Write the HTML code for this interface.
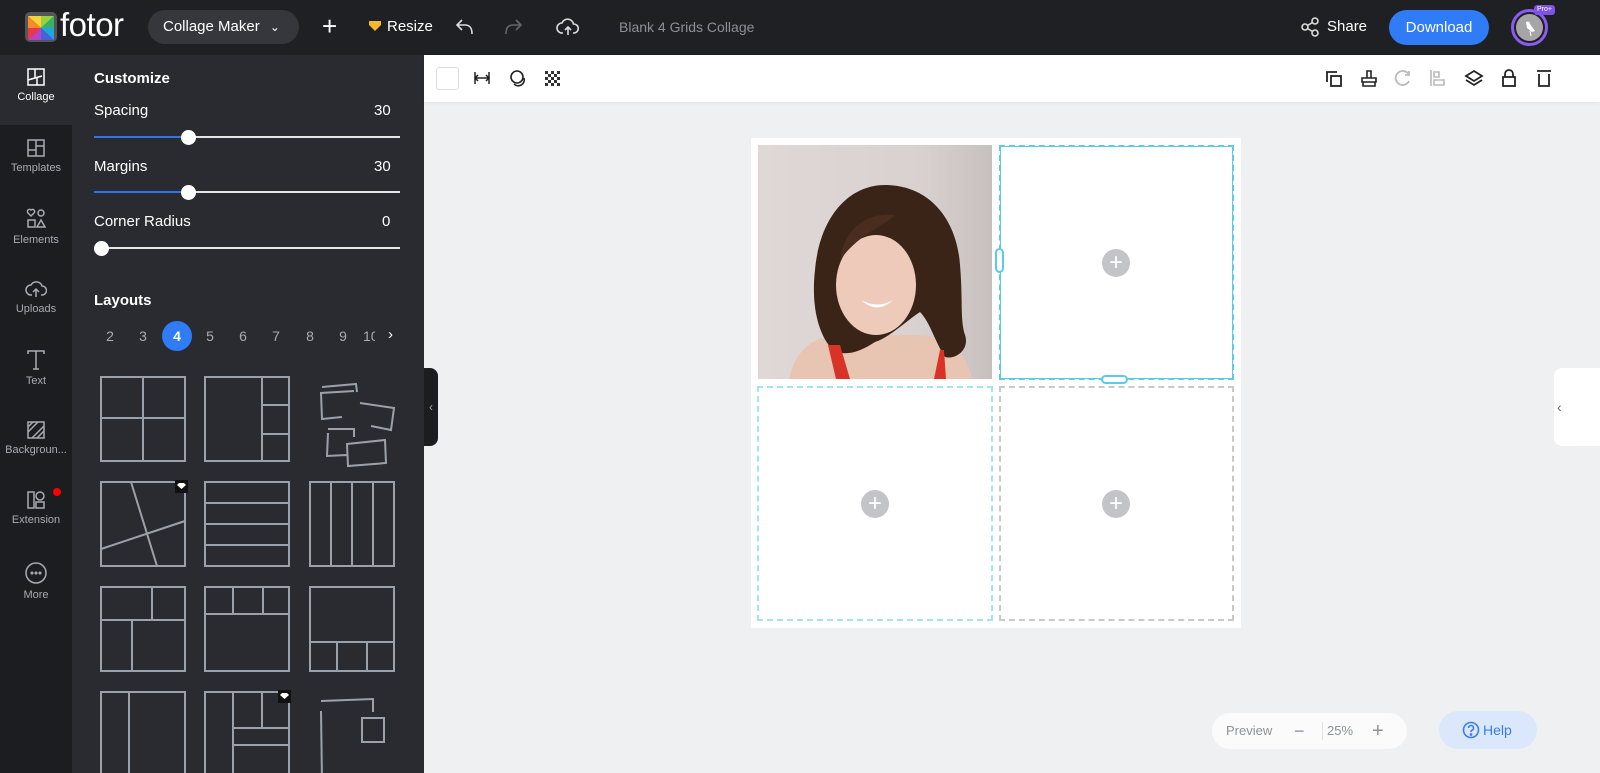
<!DOCTYPE html>
<html><head><meta charset="utf-8"><style>
*{box-sizing:border-box;margin:0;padding:0}
body{width:1600px;height:773px;overflow:hidden;font-family:"Liberation Sans",sans-serif;background:#eff0f2;position:relative}
.abs{position:absolute}
#top{left:0;top:0;width:1600px;height:55px;background:#1f2024;color:#fff}
#rail{left:0;top:55px;width:72px;height:718px;background:#1c1d21}
#panel{left:72px;top:55px;width:352px;height:718px;background:#2a2b30;color:#fff;overflow:hidden}
.ri{position:absolute;left:0;width:72px;height:70px;text-align:center;color:#a9abb3;font-size:11px}
.ri svg{display:block;margin:12px auto 4px}
.lbl{font-size:15px;color:#fff}
.track{position:absolute;left:22px;width:306px;height:2px;background:#e5e5e5}
.fill{position:absolute;left:22px;height:2px;background:#2f74e8}
.knob{position:absolute;width:15px;height:15px;border-radius:50%;background:#fff}
.num{position:absolute;font-size:14px;color:#a9abb3;width:20px;text-align:center}
#tb{left:424px;top:55px;width:1176px;height:47px;background:#fff;box-shadow:0 1px 3px rgba(0,0,0,.06)}
.cell{position:absolute;background:#fff}
.plus{position:absolute;width:28px;height:28px;border-radius:50%;background:#c3c4c7;color:#fff;font-size:24px;line-height:27px;text-align:center}
</style></head><body>
<div id="top" class="abs">
  <svg class="abs" style="left:24px;top:11px" width="34" height="32" viewBox="0 0 34 32"><rect x="1" y="1" width="32" height="30" rx="5" fill="#555"/><g transform="translate(17,17)"><path d="M0 0L-13-12H0z" fill="#f7d33a"/><path d="M0 0L0-12H13z" fill="#9bd13c"/><path d="M0 0L13-12V0z" fill="#34b36b"/><path d="M0 0H13V12z" fill="#1fa6e0"/><path d="M0 0L13 12H0z" fill="#4b5fd8"/><path d="M0 0V12H-13z" fill="#b544c9"/><path d="M0 0L-13 12V0z" fill="#e9384a"/><path d="M0 0H-13V-12z" fill="#f68a2a"/></g></svg>
  <div class="abs" style="left:60px;top:6px;font-size:33px;color:#fff;letter-spacing:-0.5px">fotor</div>
  <div class="abs" style="left:148px;top:10px;width:151px;height:34px;border-radius:17px;background:#36373c;font-size:15px;line-height:34px;padding-left:15px">Collage Maker <span style="font-size:12px;margin-left:6px">&#8964;</span></div>
  <div class="abs" style="left:322px;top:11px;font-size:26px;font-weight:300">+</div>
  <svg class="abs" style="left:368px;top:20px" width="14" height="12"><path d="M1 1h12v4L7 11 1 5z" fill="#f5b82e"/></svg>
  <div class="abs" style="left:387px;top:18px;font-size:15px">Resize</div>
  <svg class="abs" style="left:455px;top:17px" width="20" height="20" fill="none" stroke="#ddd" stroke-width="1.6"><path d="M7 3L2 8l5 5M2 8h8c5 0 7 3 7 9"/></svg>
  <svg class="abs" style="left:503px;top:17px" width="20" height="20" fill="none" stroke="#666" stroke-width="1.6"><path d="M13 3l5 5-5 5M18 8h-8c-5 0-7 3-7 9"/></svg>
  <svg class="abs" style="left:556px;top:16px" width="24" height="22" fill="none" stroke="#ddd" stroke-width="1.6"><path d="M7 17H6a5 5 0 0 1 0-10 6 6 0 0 1 11.5 1A4.5 4.5 0 0 1 18 17h-1"/><path d="M12 19v-8M9 14l3-3 3 3"/></svg>
  <div class="abs" style="left:619px;top:19px;font-size:14px;color:#8e9097">Blank 4 Grids Collage</div>
  <svg class="abs" style="left:1300px;top:17px" width="20" height="20" fill="none" stroke="#ddd" stroke-width="1.6"><circle cx="5" cy="10" r="3"/><circle cx="15" cy="4" r="3"/><circle cx="15" cy="16" r="3"/><path d="M7.5 8.5l5-3M7.5 11.5l5 3"/></svg>
  <div class="abs" style="left:1327px;top:18px;font-size:15px">Share</div>
  <div class="abs" style="left:1389px;top:10px;width:100px;height:35px;border-radius:18px;background:#2f7cf6;font-size:15px;line-height:35px;text-align:center">Download</div>
  <div class="abs" style="left:1511px;top:9px;width:37px;height:37px;border-radius:50%;border:3px solid #8b5cf0;background:#1f2024"></div>
  <div class="abs" style="left:1516px;top:14px;width:27px;height:27px;border-radius:50%;background:#a5a5a8"></div>
  <svg class="abs" style="left:1521px;top:18px" width="18" height="20"><path d="M5 4c2-1 4 0 4 2l5 7-3 1-5-4z" fill="#fff"/><path d="M9 13l1 5" stroke="#fff"/></svg>
  <div class="abs" style="left:1534px;top:5px;width:21px;height:10px;border-radius:3px;background:#7d52e6;font-size:7px;line-height:10px;text-align:center">Pro+</div>
</div>

<div id="rail" class="abs">
  <div class="ri" style="top:0;background:#2a2b30;color:#fff"><svg width="20" height="20" fill="none" stroke="#fff" stroke-width="1.5"><rect x="2" y="2" width="16" height="16"/><path d="M9 2v9l-7 2M9 11l7-2M11 11v7"/></svg>Collage</div>
  <div class="ri" style="top:71px"><svg width="20" height="20" fill="none" stroke="#a9abb3" stroke-width="1.5"><rect x="2" y="2" width="16" height="16"/><path d="M10 2v16M2 12h8M10 8h8"/></svg>Templates</div>
  <div class="ri" style="top:141px"><svg width="20" height="22" fill="none" stroke="#a9abb3" stroke-width="1.5"><path d="M5 8L2 5a2 2 0 0 1 3-3 2 2 0 0 1 3 3z"/><circle cx="15" cy="5" r="3"/><rect x="2" y="12" width="7" height="7"/><path d="M15 12l4 7h-8z"/></svg>Elements</div>
  <div class="ri" style="top:212px"><svg width="22" height="20" fill="none" stroke="#a9abb3" stroke-width="1.5"><path d="M7 16H6a5 5 0 0 1 0-10 6 6 0 0 1 11 1 4 4 0 0 1 0 9h-1"/><path d="M11 18v-8M8 13l3-3 3 3"/></svg>Uploads</div>
  <div class="ri" style="top:282px"><svg width="20" height="22" fill="none" stroke="#a9abb3" stroke-width="1.5"><path d="M2 5V2h16v3M10 2v18M7 20h6"/></svg>Text</div>
  <div class="ri" style="top:353px"><svg width="20" height="20" fill="none" stroke="#a9abb3" stroke-width="1.5"><rect x="2" y="2" width="16" height="16"/><path d="M2 12L12 2M6 18L18 6M2 7l5-5M11 18l7-7"/></svg>Backgroun...</div>
  <div class="ri" style="top:423px"><svg width="20" height="20" fill="none" stroke="#a9abb3" stroke-width="1.5"><rect x="2" y="2" width="6" height="16"/><circle cx="14" cy="6" r="4"/><rect x="10" y="12" width="8" height="6"/></svg>Extension<div style="position:absolute;left:53px;top:10px;width:8px;height:8px;border-radius:50%;background:#f00"></div></div>
  <div class="ri" style="top:494px"><svg width="24" height="24" fill="none" stroke="#a9abb3" stroke-width="1.5"><circle cx="12" cy="12" r="10"/><circle cx="8" cy="12" r=".8" fill="#a9abb3"/><circle cx="12" cy="12" r=".8" fill="#a9abb3"/><circle cx="16" cy="12" r=".8" fill="#a9abb3"/></svg>More</div>
</div>

<div id="panel" class="abs">
  <div class="abs" style="left:22px;top:15px;font-size:15px;font-weight:bold">Customize</div>
  <div class="abs lbl" style="left:22px;top:47px">Spacing</div><div class="abs lbl" style="left:302px;top:47px">30</div>
  <div class="track" style="top:81px"></div><div class="fill" style="top:81px;width:95px"></div><div class="knob" style="left:109px;top:75px"></div>
  <div class="abs lbl" style="left:22px;top:103px">Margins</div><div class="abs lbl" style="left:302px;top:103px">30</div>
  <div class="track" style="top:136px"></div><div class="fill" style="top:136px;width:95px"></div><div class="knob" style="left:109px;top:130px"></div>
  <div class="abs lbl" style="left:22px;top:158px">Corner Radius</div><div class="abs lbl" style="left:310px;top:158px">0</div>
  <div class="track" style="top:192px"></div><div class="knob" style="left:22px;top:186px"></div>
  <div class="abs" style="left:22px;top:237px;font-size:15px;font-weight:bold">Layouts</div>
  <div class="num" style="left:28px;top:273px">2</div><div class="num" style="left:61px;top:273px">3</div>
  <div class="abs" style="left:90px;top:266px;width:30px;height:30px;border-radius:50%;background:#2f7cf6;font-size:14px;font-weight:bold;line-height:30px;text-align:center">4</div>
  <div class="num" style="left:128px;top:273px">5</div><div class="num" style="left:161px;top:273px">6</div><div class="num" style="left:194px;top:273px">7</div><div class="num" style="left:228px;top:273px">8</div><div class="num" style="left:261px;top:273px">9</div><div class="num" style="left:291px;top:273px;width:12px;overflow:hidden;text-align:left">10</div>
  <div class="abs" style="left:316px;top:271px;font-size:15px;color:#fff">&#8250;</div>
  <svg class="abs" style="left:0;top:0" width="352" height="718">
   <g fill="none" stroke="#9ba1ab" stroke-width="2">
    <rect x="29" y="322" width="84" height="84"/><path d="M71 322v84M29 363h84"/>
    <rect x="133" y="322" width="84" height="84"/><path d="M190 322v84M190 350h27M190 379h27"/>
    <path d="M282 336l-33 2 1 26 20-2M250 332l34-3 1 8M288 348l34 5-3 22-20-4M256 374l26 0 0 8M256 378l-1 23 20-1M275 389l38-4 1 23-38 3z"/>
    <rect x="29" y="427" width="84" height="84"/><path d="M59 427l26 84M29 494l84-28"/>
    <rect x="133" y="427" width="84" height="84"/><path d="M133 448h84M133 469h84M133 490h84"/>
    <rect x="238" y="427" width="84" height="84"/><path d="M259 427v84M280 427v84M301 427v84"/>
    <rect x="29" y="532" width="84" height="84"/><path d="M29 565h84M80 532v33M60 565v51"/>
    <rect x="133" y="532" width="84" height="84"/><path d="M133 559h84M161 532v27M191 532v27"/>
    <rect x="238" y="532" width="84" height="84"/><path d="M238 587h84M265 587v29M295 587v29"/>
    <rect x="29" y="637" width="84" height="84"/><path d="M57 637v84"/>
    <rect x="133" y="637" width="84" height="84"/><path d="M161 637v84M190 637v36M161 673h56M161 690h56"/>
    <path d="M249 656l1 70M249 646l52-2v13M290 663h22v24h-22z"/>
   </g>
   <rect x="103" y="425" width="13" height="13" fill="#111"/><path d="M105 430l2-2h5l2 2-4.5 4z" fill="#fff"/>
   <rect x="206" y="635" width="13" height="13" fill="#111"/><path d="M208 640l2-2h5l2 2-4.5 4z" fill="#fff"/>
  </svg>
</div>
<div class="abs" style="left:424px;top:368px;width:14px;height:78px;background:#1c1d21;border-radius:0 8px 8px 0;color:#aaa;font-size:12px;line-height:78px;text-align:center">&#8249;</div>

<div id="tb" class="abs">
  <div class="abs" style="left:12px;top:12px;width:23px;height:23px;border:1px solid #ddd;border-radius:3px"></div>
  <svg class="abs" style="left:49px;top:15px" width="18" height="16" fill="none" stroke="#222" stroke-width="1.5"><path d="M2 2v12M16 2v12M2 8h14M5 5l-3 3 3 3M13 5l3 3-3 3"/></svg>
  <svg class="abs" style="left:85px;top:14px" width="18" height="18" fill="none" stroke="#222" stroke-width="1.6"><circle cx="8" cy="8" r="6"/><path d="M5 15a6 6 0 0 0 10-6"/></svg>
  <svg class="abs" style="left:121px;top:16px" width="16" height="16"><g fill="#333"><rect x="0" y="0" width="3" height="3"/><rect x="6" y="0" width="3" height="3"/><rect x="12" y="0" width="3" height="3"/><rect x="3" y="3" width="3" height="3"/><rect x="9" y="3" width="3" height="3"/><rect x="0" y="6" width="3" height="3"/><rect x="6" y="6" width="3" height="3"/><rect x="12" y="6" width="3" height="3"/><rect x="3" y="9" width="3" height="3"/><rect x="9" y="9" width="3" height="3"/><rect x="0" y="12" width="3" height="3"/><rect x="6" y="12" width="3" height="3"/><rect x="12" y="12" width="3" height="3"/></g></svg>
  <svg class="abs" style="left:900px;top:14px" width="20" height="20" fill="none" stroke="#222" stroke-width="1.8"><path d="M3 13V3h10"/><rect x="7" y="7" width="10" height="10"/></svg>
  <svg class="abs" style="left:936px;top:14px" width="18" height="20" fill="none" stroke="#222" stroke-width="1.6"><path d="M7 2h4v7H7zM2 9h14v4H2zM3 13v4h12v-4"/></svg>
  <svg class="abs" style="left:970px;top:14px" width="18" height="18" fill="none" stroke="#bbb" stroke-width="1.8"><path d="M15 6a7 7 0 1 0 0 6M15 2v4h-4"/></svg>
  <svg class="abs" style="left:1005px;top:14px" width="18" height="18" fill="none" stroke="#bbb" stroke-width="1.6"><path d="M2 1v16M5 3h5v5H5zM5 11h10v5H5z"/></svg>
  <svg class="abs" style="left:1040px;top:14px" width="20" height="18" fill="none" stroke="#222" stroke-width="1.8"><path d="M10 2l8 5-8 5-8-5z"/><path d="M2 11l8 5 8-5"/></svg>
  <svg class="abs" style="left:1076px;top:13px" width="18" height="20" fill="none" stroke="#222" stroke-width="1.8"><path d="M5 9V6a4 4 0 0 1 8 0v3"/><rect x="3" y="9" width="12" height="9"/></svg>
  <svg class="abs" style="left:1111px;top:13px" width="18" height="20" fill="none" stroke="#222" stroke-width="1.8"><path d="M2 3h14M4 6v12h10V6"/></svg>
</div>

<div class="abs" style="left:751px;top:138px;width:490px;height:490px;background:#fff"></div>
<svg class="abs" style="left:758px;top:145px" width="234" height="234" viewBox="0 0 234 234">
 <defs><linearGradient id="bg" x1="0" y1="0" x2="1" y2="0"><stop offset="0" stop-color="#e0d8d7"/><stop offset=".7" stop-color="#d9d1d0"/><stop offset="1" stop-color="#c7c0bf"/></linearGradient></defs>
 <rect width="234" height="234" fill="url(#bg)"/>
 <path d="M30 240c5-35 25-50 55-50h70c35 0 55 15 60 50z" fill="#e8c5b3"/>
 <path d="M75 205c-15-15-22-45-18-80 5-55 35-85 70-85 45 0 72 35 75 80 3 35 0 55 5 70 5 15-10 25-20 22-10-15-15-35-25-45-15 10-30 25-45 30-15 10-30 15-42 8z" fill="#3a2418"/>
 <ellipse cx="118" cy="140" rx="40" ry="50" fill="#edcab9"/>
 <path d="M82 115c5-35 30-48 55-45-12 12-35 18-55 45z" fill="#4a2d1e"/>
 <path d="M103 155q17 9 32 0q-16 15-32 0z" fill="#fff"/>
 <path d="M70 200l8 34h14l-10-34zM182 205l-6 29h12l-2-29z" fill="#d93226"/>
</svg>
<div class="cell" style="left:999px;top:145px;width:235px;height:235px;border:2px dashed #5ccbea;outline:1px solid #5ccbea;outline-offset:-2px"></div>
<div class="cell" style="left:757px;top:386px;width:236px;height:235px;border:2px dashed #a8e3f2"></div>
<div class="cell" style="left:999px;top:386px;width:235px;height:235px;border:2px dashed #c9c9c9"></div>
<div class="abs" style="left:995px;top:248px;width:9px;height:25px;border:2px solid #5ccbea;border-radius:5px;background:#fff"></div>
<div class="abs" style="left:1101px;top:375px;width:27px;height:9px;border:2px solid #5ccbea;border-radius:5px;background:#fff"></div>
<div class="plus" style="left:1102px;top:249px">+</div>
<div class="plus" style="left:861px;top:490px">+</div>
<div class="plus" style="left:1102px;top:490px">+</div>

<div class="abs" style="left:1554px;top:368px;width:46px;height:78px;background:#fff;border-radius:8px 0 0 8px;color:#666;font-size:14px;line-height:78px;padding-left:3px">&#8249;</div>

<div class="abs" style="left:1212px;top:713px;width:195px;height:36px;border-radius:18px;background:#fbfbfc;color:#8e9097;font-size:13px;line-height:36px">
 <span class="abs" style="left:14px">Preview</span><span class="abs" style="left:110px;top:9px;width:1px;height:18px;background:#e3e3e3"></span>
 <span class="abs" style="left:82px;font-size:18px">&minus;</span><span class="abs" style="left:115px">25%</span><span class="abs" style="left:160px;font-size:20px">+</span>
</div>
<div class="abs" style="left:1439px;top:711px;width:98px;height:38px;border-radius:19px;background:#dbe8fb;color:#3d7ce8;font-size:14px;line-height:38px;padding-left:24px">
 <svg class="abs" style="left:23px;top:10px" width="18" height="18" fill="none" stroke="#3d7ce8" stroke-width="1.6"><circle cx="9" cy="9" r="7.5"/><path d="M6.5 7a2.5 2.5 0 1 1 3.5 2.3c-.7.3-1 .8-1 1.5V11"/><circle cx="9" cy="13.5" r=".6" fill="#3d7ce8"/></svg>
 <span style="margin-left:20px">Help</span>
</div>
</body></html>
